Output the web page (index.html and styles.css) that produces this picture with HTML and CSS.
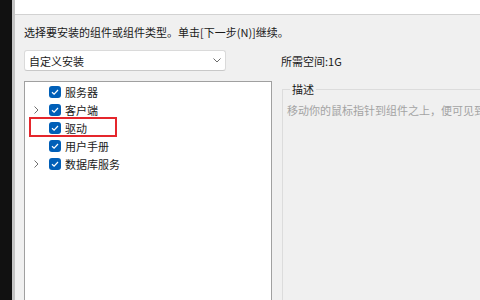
FILE: index.html
```html
<!DOCTYPE html>
<html lang="zh-CN">
<head>
    <meta charset="UTF-8">
    <meta name="viewport" content="width=device-width, initial-scale=1.0">
    <title>选择组件</title>
    <link rel="stylesheet" href="styles.css">
</head>
<body>
    <div class="desktop-edge"></div>

    <div class="window">
        <div class="header"></div>

        <div class="content">
            <p class="intro">选择要安装的组件或组件类型。单击[下一步(N)]继续。</p>

            <div class="type-row">
                <div class="combo">
                    <span>自定义安装</span>
                    <svg class="combo-arrow" width="8" height="5" viewBox="0 0 8 5">
                        <path d="M0.5 0.5 L4 4 L7.5 0.5" fill="none" stroke="#6b6b6b" stroke-width="1"/>
                    </svg>
                </div>
                <span class="space">所需空间:1G</span>
            </div>

            <div class="main">
                <ul class="tree">
                    <li class="node">
                        <span class="expander"></span>
                        <span class="check"></span>
                        <span>服务器</span>
                    </li>
                    <li class="node">
                        <span class="expander">
                            <svg width="5" height="8" viewBox="0 0 5 8">
                                <path d="M0.5 0.5 L4 4 L0.5 7.5" fill="none" stroke="#707070" stroke-width="1"/>
                            </svg>
                        </span>
                        <span class="check"></span>
                        <span>客户端</span>
                    </li>
                    <li class="node marked">
                        <span class="expander"></span>
                        <span class="check"></span>
                        <span>驱动</span>
                    </li>
                    <li class="node">
                        <span class="expander"></span>
                        <span class="check"></span>
                        <span>用户手册</span>
                    </li>
                    <li class="node">
                        <span class="expander">
                            <svg width="5" height="8" viewBox="0 0 5 8">
                                <path d="M0.5 0.5 L4 4 L0.5 7.5" fill="none" stroke="#707070" stroke-width="1"/>
                            </svg>
                        </span>
                        <span class="check"></span>
                        <span>数据库服务</span>
                    </li>
                </ul>

                <fieldset class="desc">
                    <legend>描述</legend>
                    <p>移动你的鼠标指针到组件之上，便可见到它的描述。</p>
                </fieldset>
            </div>
        </div>
    </div>
</body>
</html>
```

FILE: styles.css
```css
body {
    margin: 0;
    height: 300px;
    overflow: hidden;
    display: flex;
    background-color: #f0f0f0;
    color: #1a1a1a;
    font-family: "Noto Sans CJK SC", "Noto Sans", sans-serif;
    font-size: 11px;
}

.desktop-edge {
    width: 12px;
    flex-shrink: 0;
    background-color: #111111;
    border-right: 3px solid #c4c4c4;
}

.window {
    flex: 1;
    display: flex;
    flex-direction: column;
    min-width: 0;
}

.header {
    height: 14px;
    flex-shrink: 0;
    background-color: #ffffff;
    border-bottom: 1px solid #d2d2d2;
}

.content {
    flex: 1;
    display: flex;
    flex-direction: column;
    padding-left: 9px;
}

.intro {
    margin: 9px 0 0;
    line-height: 16px;
    white-space: nowrap;
}

.type-row {
    display: flex;
    align-items: center;
    margin-top: 10px;
}

.combo {
    width: 202px;
    height: 21px;
    box-sizing: border-box;
    display: flex;
    align-items: center;
    justify-content: space-between;
    padding: 0 4px 0 4px;
    background-color: #ffffff;
    border: 1px solid #dadada;
    border-bottom-color: #c8c8c8;
    border-radius: 3px;
}

.space {
    margin-left: 55px;
}

.main {
    flex: 1;
    display: flex;
    margin-top: 10px;
}

.tree {
    width: 248px;
    flex-shrink: 0;
    box-sizing: border-box;
    margin: 0;
    padding: 1px 0 0;
    list-style: none;
    background-color: #ffffff;
    border: 1px solid #a0a0a0;
    border-bottom: none;
}

.node {
    position: relative;
    display: flex;
    align-items: center;
    height: 18px;
    padding-left: 8px;
}

.expander {
    width: 16px;
    display: flex;
    align-items: center;
    padding-left: 1px;
    box-sizing: border-box;
}

.check {
    width: 12px;
    height: 12px;
    margin-right: 4px;
    border-radius: 3px;
    background-color: #005fb8;
    background-image: url("data:image/svg+xml,%3Csvg xmlns='http://www.w3.org/2000/svg' width='12' height='12' viewBox='0 0 12 12'%3E%3Cpath d='M3 6.2 L5.1 8.2 L9 4' fill='none' stroke='white' stroke-width='1.2'/%3E%3C/svg%3E");
}

/* red annotation box */
.marked::after {
    content: "";
    position: absolute;
    left: 4px;
    top: -2px;
    width: 88px;
    height: 20px;
    box-sizing: border-box;
    border: 2px solid #e5262c;
}

.desc {
    width: 320px;
    flex-shrink: 0;
    margin: 0 0 0 10px;
    padding: 0 0 0 4px;
    border: 1px solid #dcdcdc;
    border-bottom: none;
    min-width: 0;
}

.desc legend {
    margin-left: 3px;
    padding: 0 2px;
    line-height: 16px;
}

.desc p {
    margin: 5px 0 0;
    line-height: 16px;
    color: #a3a3a3;
    white-space: nowrap;
}
```
